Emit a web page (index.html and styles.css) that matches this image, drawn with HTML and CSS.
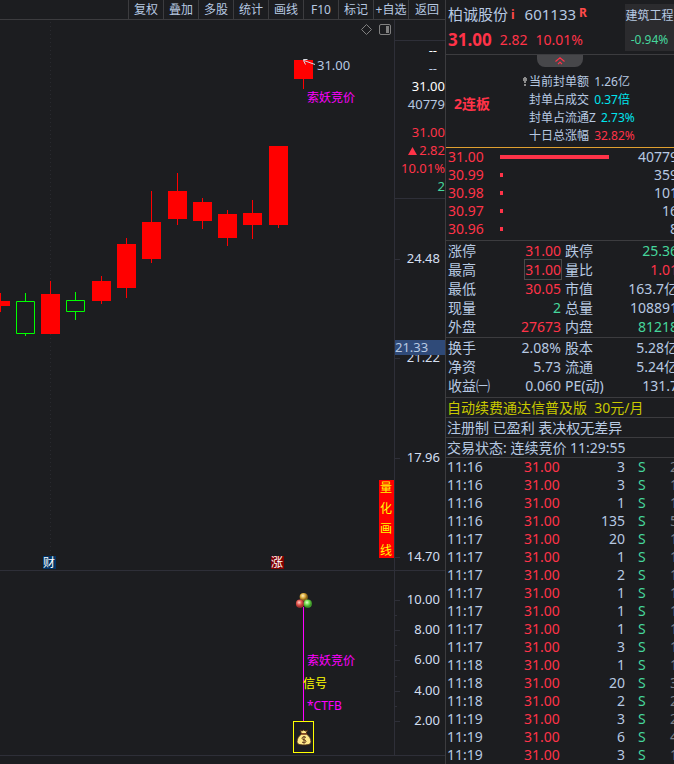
FILE: index.html
```html
<!DOCTYPE html>
<html lang="zh-CN">
<head>
  <meta charset="UTF-8">
  <meta name="viewport" content="width=device-width, initial-scale=1.0">
  <title>柏诚股份 601133</title>
  <link rel="stylesheet" href="styles.css">
</head>
<body>
  <div class="app">
    <main class="chart">
      <nav class="toolbar">
        <button>复权</button>
        <button>叠加</button>
        <button>多股</button>
        <button>统计</button>
        <button>画线</button>
        <button>F10</button>
        <button>标记</button>
        <button>+自选</button>
        <button>返回</button>
      </nav>

      <div class="pane">
        <div class="plot">
          <svg width="394" height="550" viewBox="0 20 394 550">
            <path class="dots" d="M50.5 22V570"/>
            <!-- 工具图标 -->
            <g class="tool-icon">
              <path d="M366.5 24.5l5 5-5 5-5-5z"/>
              <rect x="379.5" y="24.5" width="11" height="10" rx="1.5"/>
              <rect class="solid" x="386" y="26" width="3" height="7"/>
            </g>
            <!-- K线 -->
            <g class="up">
              <path d="M0 293h1v19H0z M0 301h10v5H0z"/>
              <path d="M50 281h1v13h-1z M41 294h19v40H41z"/>
              <path d="M101 276h1v28h-1z M92 281h19v20H92z"/>
              <path d="M126 238h1v60h-1z M117 244h19v44h-19z"/>
              <path d="M151 191h1v72h-1z M142 222h19v37h-19z"/>
              <path d="M177 173h1v52h-1z M168 191h19v28h-19z"/>
              <path d="M202 198h1v31h-1z M193 202h19v19h-19z"/>
              <path d="M227 210h1v36h-1z M218 214h19v24h-19z"/>
              <path d="M252 200h1v39h-1z M243 213h19v12h-19z"/>
              <path d="M278 225h1v3h-1z M269 146h19v79h-19z"/>
              <path d="M303 79h1v10h-1z M294 60h19v19h-19z"/>
            </g>
            <g class="down">
              <path d="M16.5 301.5h18v32h-18z M25.5 293v8 M25.5 334v2"/>
              <path d="M66.5 300.5h18v11h-18z M75.5 292v8 M75.5 312v8"/>
            </g>
            <path class="arrow" d="M315 64.5l-11-4 M307.5 59.5h-4v1l2 4"/>
            <text class="num soft" x="317" y="70">31.00</text>
            <text class="note magenta" x="307" y="102">索妖竞价</text>
            <!-- 事件标记 -->
            <rect class="badge-cai" x="43" y="556" width="13" height="13"/>
            <text class="note white" x="43" y="567">财</text>
            <rect class="badge-zhang" x="271" y="556" width="13" height="13"/>
            <text class="note white" x="271" y="567">涨</text>
            <rect class="up" x="379" y="480" width="15" height="78"/>
            <text class="note yellow" x="380" y="492">量</text>
            <text class="note yellow" x="380" y="513">化</text>
            <text class="note yellow" x="380" y="533">画</text>
            <text class="note yellow" x="380" y="555">线</text>
          </svg>
        </div>
        <div class="axis">
          <div class="cursor-info">
            <div class="open">
              <p class="white blank">--</p>
              <p class="blank">--</p>
              <p class="white">31.00</p>
              <p>40779</p>
            </div>
            <div class="close">
              <p class="red">31.00</p>
              <p class="red"><svg width="9" height="8" viewBox="0 0 9 8"><path d="M4.5 0L9 8H0z" fill="currentColor"/></svg>2.82</p>
              <p class="red">10.01%</p>
              <p class="green">2</p>
            </div>
          </div>
          <svg width="50" height="371" viewBox="395 199 50 371">
            <path class="tick" d="M395 259.5h5 M395 358.5h5 M395 458.5h5 M395 557.5h5"/>
            <g class="num scale">
              <text x="440" y="263">24.48</text>
              <text x="440" y="362">21.22</text>
              <text x="440" y="462">17.96</text>
              <text x="440" y="561">14.70</text>
            </g>
            <rect class="cursor" x="395" y="340" width="50" height="15"/>
            <text class="num soft" x="395" y="352">21.33</text>
          </svg>
        </div>
      </div>

      <div class="pane">
        <div class="plot">
          <svg width="394" height="184" viewBox="0 571 394 184">
            <defs>
              <radialGradient id="gold" cx=".4" cy=".35"><stop offset="0" stop-color="#fff3c0"/><stop offset=".6" stop-color="#d9a93a"/><stop offset="1" stop-color="#8a6518"/></radialGradient>
              <radialGradient id="rose" cx=".4" cy=".35"><stop offset="0" stop-color="#ffd0c8"/><stop offset=".6" stop-color="#e0554c"/><stop offset="1" stop-color="#a83230"/></radialGradient>
              <radialGradient id="lime" cx=".4" cy=".35"><stop offset="0" stop-color="#e2ffd0"/><stop offset=".6" stop-color="#72d84c"/><stop offset="1" stop-color="#3f9a2a"/></radialGradient>
            </defs>
            <path class="signal" d="M303.5 607v114"/>
            <circle cx="303.7" cy="597" r="4.1" fill="url(#gold)"/>
            <circle cx="300" cy="603.7" r="4.1" fill="url(#rose)"/>
            <circle cx="307.8" cy="603.7" r="4.1" fill="url(#lime)"/>
            <text class="note magenta" x="307" y="665">索妖竞价</text>
            <text class="note yellow" x="303" y="688">信号</text>
            <text class="note magenta" x="307" y="710">*CTFB</text>
            <rect class="frame" x="293.5" y="721.5" width="20" height="31"/>
            <!-- 钱袋 -->
            <g class="bag">
              <path d="M300 730l2 1 1.5-1 2 1 2-1-1.5 4h-4.5z"/>
              <path d="M301.5 734h5c3 2 4.500 5 4.500 7.500 0 2.500-2 3.500-7 3.500s-7-1-7-3.500c0-2.500 1.500-5.500 4.500-7.500z"/>
              <path class="tie" d="M301 734h6"/>
            </g>
            <path class="dollar" d="M306 737.500c-1-1-4-1-4 .8 0 2 4 1 4 3 0 1.800-3 1.800-4 .7 M304 736v7.500"/>
          </svg>
        </div>
        <div class="axis">
          <svg width="50" height="184" viewBox="395 571 50 184">
            <path class="tick" d="M395 600.5h5 M395 630.5h5 M395 660.5h5 M395 691.5h5 M395 721.5h5 M395 615.5h2 M395 645.5h2 M395 676.5h2 M395 706.5h2"/>
            <g class="num scale">
              <text x="440" y="604">10.00</text>
              <text x="440" y="634">8.00</text>
              <text x="440" y="664">6.00</text>
              <text x="440" y="695">4.00</text>
              <text x="440" y="725">2.00</text>
            </g>
          </svg>
        </div>
      </div>
    </main>

    <aside class="quote">
      <header class="quote-head">
        <div class="stock">
          <h1>柏诚股份<b class="flag info">i</b><span class="code">601133</span><b class="flag">R</b></h1>
          <p class="price red"><strong>31.00</strong><span>2.82</span><span>10.01%</span></p>
        </div>
        <div class="industry">
          <p>建筑工程</p>
          <p class="green">-0.94%</p>
        </div>
      </header>

      <section class="limit">
        <button class="fold" aria-label="收起">
          <svg width="10" height="8" viewBox="0 0 10 8"><path d="M.5 4.5L5 .8l4.500 3.700 M3 7.200l2-2 2 2" fill="none" stroke="#ff3348" stroke-width="1.2"/></svg>
        </button>
        <div class="limit-body">
          <strong class="streak red">2连板</strong>
          <div class="limit-lines">
            <p><svg class="pin" width="4" height="9" viewBox="0 0 4 9"><path d="M0 1h1V0h2v1h1v3H3v2H1V4H0z M1 7h2v2H1z" fill="#8b8b8b"/></svg>当前封单额 <span>1.26亿</span></p>
            <p>封单占成交 <span class="cyan">0.37倍</span></p>
            <p>封单占流通Z <span class="cyan">2.73%</span></p>
            <p>十日总涨幅 <span class="red">32.82%</span></p>
          </div>
        </div>
      </section>

      <table class="orders">
        <tr><td class="red">31.00</td><td><div class="bar full"></div></td><td>40779</td></tr>
        <tr><td class="red">30.99</td><td><div class="bar"></div></td><td>359</td></tr>
        <tr><td class="red">30.98</td><td><div class="bar"></div></td><td>101</td></tr>
        <tr><td class="red">30.97</td><td><div class="bar"></div></td><td>16</td></tr>
        <tr><td class="red">30.96</td><td><div class="bar"></div></td><td>8</td></tr>
      </table>

      <table class="stats">
        <tr><th>涨停</th><td class="red">31.00</td><th>跌停</th><td class="green">25.36</td></tr>
        <tr><th>最高</th><td class="red"><span class="boxed">31.00</span></td><th>量比</th><td class="red">1.01</td></tr>
        <tr><th>最低</th><td class="red">30.05</td><th>市值</th><td>163.7亿</td></tr>
        <tr><th>现量</th><td class="green">2</td><th>总量</th><td>108891</td></tr>
        <tr><th>外盘</th><td class="red">27673</td><th>内盘</th><td class="green">81218</td></tr>
      </table>

      <table class="stats">
        <tr><th>换手</th><td>2.08%</td><th>股本</th><td>5.28亿</td></tr>
        <tr><th>净资</th><td>5.73</td><th>流通</th><td>5.24亿</td></tr>
        <tr><th>收益㈠</th><td>0.060</td><th>PE(动)</th><td>131.7</td></tr>
      </table>

      <p class="line"><a href="#">自动续费通达信普及版&nbsp; 30元/月</a></p>
      <p class="line">注册制 已盈利 表决权无差异</p>
      <p class="line">交易状态: 连续竞价 11:29:55</p>

      <table class="deals">
        <tr><td>11:16</td><td>31.00</td><td>3</td><td>S</td><td>2</td></tr>
        <tr><td>11:16</td><td>31.00</td><td>3</td><td>S</td><td>1</td></tr>
        <tr><td>11:16</td><td>31.00</td><td>1</td><td>S</td><td>1</td></tr>
        <tr><td>11:16</td><td>31.00</td><td>135</td><td>S</td><td>5</td></tr>
        <tr><td>11:17</td><td>31.00</td><td>20</td><td>S</td><td>1</td></tr>
        <tr><td>11:17</td><td>31.00</td><td>1</td><td>S</td><td>1</td></tr>
        <tr><td>11:17</td><td>31.00</td><td>2</td><td>S</td><td>1</td></tr>
        <tr><td>11:17</td><td>31.00</td><td>1</td><td>S</td><td>1</td></tr>
        <tr><td>11:17</td><td>31.00</td><td>1</td><td>S</td><td>1</td></tr>
        <tr><td>11:17</td><td>31.00</td><td>1</td><td>S</td><td>1</td></tr>
        <tr><td>11:17</td><td>31.00</td><td>3</td><td>S</td><td>1</td></tr>
        <tr><td>11:18</td><td>31.00</td><td>1</td><td>S</td><td>1</td></tr>
        <tr><td>11:18</td><td>31.00</td><td>20</td><td>S</td><td>3</td></tr>
        <tr><td>11:18</td><td>31.00</td><td>2</td><td>S</td><td>2</td></tr>
        <tr><td>11:19</td><td>31.00</td><td>3</td><td>S</td><td>2</td></tr>
        <tr><td>11:19</td><td>31.00</td><td>6</td><td>S</td><td>4</td></tr>
        <tr><td>11:19</td><td>31.00</td><td>3</td><td>S</td><td>1</td></tr>
      </table>
    </aside>
  </div>
</body>
</html>
```
FILE: styles.css
```css
* {
  box-sizing: border-box;
}
body {
  margin: 0;
  background-color: #1c1d20;
  color: #b7c9e2;
  font-family: "Noto Sans", "Noto Sans CJK SC", sans-serif;
  font-size: 14px;
}
p, h1 {
  margin: 0;
}
svg {
  display: block;
}
button {
  margin: 0;
  padding: 0;
  border: none;
  background: none;
  color: inherit;
  font: inherit;
  cursor: pointer;
}
a {
  color: #c8c800;
  text-decoration: none;
}
.red {
  color: #ff3348;
}
.green {
  color: #46d69c;
}
.cyan {
  color: #00e5ee;
}
.white {
  color: #ffffff;
}

.app {
  display: grid;
  grid-template-columns: minmax(0, 1fr) 229px;
  min-height: 100vh;
  overflow: hidden;
}

/* 左侧图表 */
.toolbar {
  display: flex;
  justify-content: flex-end;
  height: 20px;
  border-bottom: 1px solid #3c3c3f;
}
.toolbar button {
  width: 35px;
  border-left: 1px solid #3c3c3f;
  font-size: 12px;
  line-height: 18px;
  white-space: nowrap;
}
.toolbar button:last-child {
  width: 37px;
}
.pane {
  display: flex;
  border-bottom: 1px solid #2e2f38;
}
.plot {
  flex: 1;
  display: flex;
  justify-content: flex-end;
  min-width: 0;
  overflow: hidden;
}
.plot svg {
  flex: none;
}
.axis {
  width: 51px;
  border-left: 1px solid #2e2f38;
}
.cursor-info {
  margin-top: 20px;
  padding-bottom: 3px;
  border: solid #2e2f38;
  border-width: 1px 0;
  font-size: 13px;
  line-height: 18px;
  text-align: right;
}
.cursor-info .close {
  margin-top: 10px;
}
.cursor-info .blank {
  padding-right: 8px;
}
.cursor-info svg {
  display: inline;
  margin-right: 2px;
}
.dots {
  stroke: #292a2f;
  stroke-dasharray: 1 3;
}
.tool-icon {
  fill: none;
  stroke: #808080;
}
.tool-icon .solid {
  fill: #808080;
  stroke: none;
}
.up {
  fill: #ff0000;
}
.down {
  fill: none;
  stroke: #00ff00;
}
.arrow {
  fill: none;
  stroke: #d8dce4;
}
.tick {
  stroke: #2e2f38;
}
.num {
  font-size: 13px;
  fill: #d3dff0;
}
.num.soft {
  fill: #b7c9e2;
}
.scale {
  text-anchor: end;
}
.note {
  font-size: 12px;
}
.note.magenta {
  fill: #ff00ff;
}
.note.yellow {
  fill: #ffff00;
}
.note.white {
  fill: #ffffff;
}
.badge-cai {
  fill: #003366;
}
.badge-zhang {
  fill: #800000;
}
.cursor {
  fill: #2f4a78;
}
.signal {
  stroke: #ff00ff;
}
.frame {
  fill: none;
  stroke: #ffff00;
}
.bag {
  fill: #ffe98a;
  stroke: #4a2c12;
}
.bag .tie {
  stroke: #8a3a1a;
}
.dollar {
  fill: none;
  stroke: #5c3418;
}

/* 右侧报价 */
.quote {
  min-width: 0;
  overflow: hidden;
  border-left: 1px solid #3c3c3f;
}
.quote-head {
  display: flex;
  justify-content: space-between;
  height: 55px;
  border-bottom: 1px solid #3c3c3f;
}
.stock {
  padding: 4px 0 0 2px;
}
.stock h1 {
  display: flex;
  font-size: 15px;
  font-weight: normal;
  line-height: 20px;
  white-space: nowrap;
}
.flag {
  margin-left: 3px;
  color: #ff4a4a;
  font-size: 12px;
  line-height: 17px;
}
.flag.info {
  line-height: 22px;
}
.code {
  margin-left: 10px;
}
.price {
  display: flex;
  align-items: center;
  gap: 8px;
  margin-top: 2px;
  line-height: 24px;
}
.price strong {
  font-size: 17px;
}
.industry {
  width: 49px;
  margin: 4px 0 3px;
  background-color: #2b2b2e;
  font-size: 12px;
  line-height: 24px;
  text-align: center;
  white-space: nowrap;
}
.limit {
  border-bottom: 1px solid #e0a030;
}
.fold {
  display: flex;
  justify-content: center;
  width: 46px;
  height: 12px;
  margin: 0 auto;
  padding-top: 2px;
  border-radius: 0 0 8px 8px;
  background-color: #47474a;
}
.limit-body {
  display: flex;
  align-items: center;
  padding: 6px 0 2px 8px;
}
.streak {
  width: 69px;
  line-height: 20px;
  padding-bottom: 10px;
}
.limit-lines {
  font-size: 12px;
  line-height: 18px;
  white-space: nowrap;
}
.limit-lines p {
  padding-left: 6px;
}
.limit-lines span {
  margin-left: 2px;
}
.limit-lines .pin {
  display: inline;
  margin: 0 2px 0 -6px;
}

/* 表格比面板略宽，右侧被裁切 */
table {
  width: 232px;
  border-collapse: collapse;
  table-layout: fixed;
}
td, th {
  padding: 0;
  font-weight: normal;
  text-align: left;
  white-space: nowrap;
}
.orders {
  margin: 0 0 2px;
}
.orders td {
  height: 18px;
  line-height: 18px;
}
.orders td:first-child {
  width: 54px;
  padding-left: 2px;
}
.orders td:last-child {
  width: 60px;
  text-align: right;
}
.bar {
  width: 3px;
  height: 4px;
  background-color: #ff3348;
}
.bar.full {
  width: 109px;
}
.stats {
  margin-bottom: 1px;
  border-top: 1px solid #3c3c3f;
}
.stats td, .stats th {
  height: 19px;
  line-height: 19px;
}
.stats th {
  width: 50px;
  padding-left: 2px;
}
.stats th:first-child {
  width: 48px;
}
.stats td {
  text-align: right;
}
.stats td:nth-child(2) {
  width: 69px;
  padding-right: 2px;
}
.boxed {
  outline: 1px solid #4a4a4a;
}
.line {
  height: 20px;
  padding-left: 1px;
  border-top: 1px solid #3c3c3f;
  line-height: 19px;
  white-space: nowrap;
}
.stats + .line {
  margin-top: 2px;
}
.deals {
  border-top: 1px solid #3c3c3f;
}
.deals td {
  height: 18px;
  line-height: 18px;
}
.deals td:nth-child(1) {
  width: 78px;
  padding-left: 1px;
}
.deals td:nth-child(2) {
  width: 50px;
  color: #ff3348;
}
.deals td:nth-child(3) {
  width: 51px;
  text-align: right;
}
.deals td:nth-child(4) {
  width: 45px;
  padding-left: 13px;
  color: #46d69c;
}
.deals td:nth-child(5) {
  color: #7c8088;
}
```
